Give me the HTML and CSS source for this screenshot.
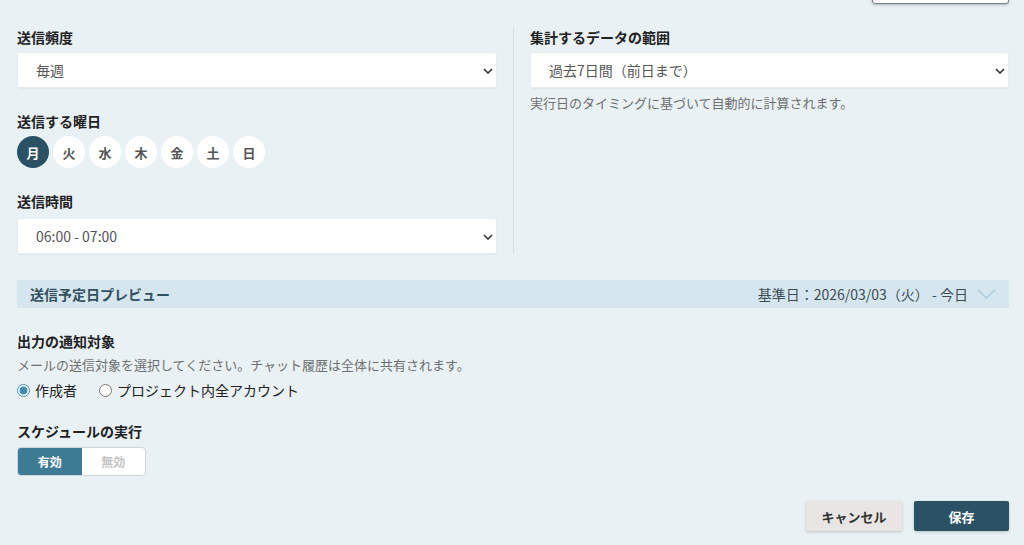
FILE: index.html
```html
<!DOCTYPE html>
<html lang="ja">
<head>
  <meta charset="UTF-8">
  <title>スケジュール設定</title>
  <link rel="stylesheet" href="styles.css">
</head>
<body>
  <div class="top-row"><div class="top-btn"></div></div>

  <div class="grid">
    <div class="col">
      <div class="label">送信頻度</div>
      <div class="select-wrap">
        <select class="select"><option>毎週</option></select>
        <svg class="chev" width="10" height="6" viewBox="0 0 10 6"><path d="M1 1l4 4 4-4" fill="none" stroke="#333" stroke-width="1.6"/></svg>
      </div>

      <div class="label mt">送信する曜日</div>
      <div class="days">
        <span class="day active">月</span>
        <span class="day">火</span>
        <span class="day">水</span>
        <span class="day">木</span>
        <span class="day">金</span>
        <span class="day">土</span>
        <span class="day">日</span>
      </div>

      <div class="label mt">送信時間</div>
      <div class="select-wrap sel-time">
        <select class="select"><option>06:00 - 07:00</option></select>
        <svg class="chev" width="10" height="6" viewBox="0 0 10 6"><path d="M1 1l4 4 4-4" fill="none" stroke="#333" stroke-width="1.6"/></svg>
      </div>
    </div>

    <div class="col col-right">
      <div class="label">集計するデータの範囲</div>
      <div class="select-wrap">
        <select class="select"><option>過去7日間（前日まで）</option></select>
        <svg class="chev" width="10" height="6" viewBox="0 0 10 6"><path d="M1 1l4 4 4-4" fill="none" stroke="#333" stroke-width="1.6"/></svg>
      </div>
      <div class="help">実行日のタイミングに基づいて自動的に計算されます。</div>
    </div>
  </div>

  <div class="preview">
    <span class="preview-title">送信予定日プレビュー</span>
    <span class="preview-right">
      基準日：2026/03/03（火） - 今日
      <svg width="19" height="10" viewBox="0 0 19 10"><path d="M1 1l8.5 8 8.5-8" fill="none" stroke="#a9cbdb" stroke-width="1.3"/></svg>
    </span>
  </div>

  <div class="label target">出力の通知対象</div>
  <div class="help help-tight">メールの送信対象を選択してください。チャット履歴は全体に共有されます。</div>
  <div class="radios">
    <label class="radio"><input type="radio" name="target" checked> 作成者</label>
    <label class="radio"><input type="radio" name="target"> プロジェクト内全アカウント</label>
  </div>

  <div class="label run">スケジュールの実行</div>
  <div class="toggle">
    <span class="seg on">有効</span>
    <span class="seg">無効</span>
  </div>

  <div class="actions">
    <button class="btn btn-cancel">キャンセル</button>
    <button class="btn btn-save">保存</button>
  </div>
</body>
</html>
```

FILE: styles.css
```css
body { margin: 0; padding: 0 15px 0 17px; background: #e9f1f5; font-family: "Noto Sans CJK JP", "Noto Sans", sans-serif; color: #222; font-size: 14px; overflow: hidden; height: 545px; }
.top-row { height: 3px; display: flex; justify-content: flex-end; }
.top-btn { width: 135px; height: 34px; margin-top: -32px; background: #fff; border: 1px solid #71838d; border-radius: 3px; box-shadow: 0 1px 3px rgba(0,0,0,0.25); }

.grid { display: grid; grid-template-columns: 480px 1fr; column-gap: 16px; margin-top: 24px; }
.col-right { border-left: 1px solid #d5dfe4; padding-left: 16px; }

.label { font-weight: bold; font-size: 14px; line-height: 20px; color: #222; margin-bottom: 5px; }
.label.mt { margin-top: 23px; }
.help { font-size: 13px; line-height: 20px; color: #6f6f6f; margin-top: 5px; }

.select-wrap { position: relative; height: 36px; }
.sel-time { margin-top: 7px; }
.select { appearance: none; -webkit-appearance: none; box-sizing: border-box; width: 100%; height: 36px; border: 1px solid #e6ecef; border-radius: 2px; background: #fff; padding: 0 18px; font-family: inherit; font-size: 14px; color: #555; box-shadow: 0 1px 1px rgba(0,0,0,0.04); }
.chev { position: absolute; right: 4px; top: 16px; pointer-events: none; }

.days { display: flex; gap: 4px; margin-top: 1px; }
.day { width: 32px; height: 32px; border-radius: 50%; background: #fff; display: flex; align-items: center; justify-content: center; font-size: 13px; font-weight: bold; color: #555; }
.day.active { background: #2b5264; color: #fff; }

.preview { display: flex; justify-content: space-between; align-items: center; height: 28px; margin-top: 26px; background: #d5e6ee; padding: 0 13px; }
.preview-title { font-weight: bold; font-size: 14px; color: #34505e; }
.preview-right { display: flex; align-items: center; gap: 9px; font-size: 14px; color: #3c4c55; }

.target { margin-top: 23px; margin-bottom: 4px; }
.help-tight { margin-top: 0; }
.radios { display: flex; gap: 22px; margin-top: 5px; font-size: 14px; color: #222; line-height: 20px; }
.radio { display: flex; align-items: center; gap: 5px; }
.radio input { margin: 0; width: 13px; height: 13px; accent-color: #3f8db2; }

.run { margin-top: 21px; margin-bottom: 6px; }
.toggle { display: flex; width: 129px; height: 29px; border: 1px solid #cfd6da; border-radius: 4px; overflow: hidden; background: #fff; box-sizing: border-box; }
.seg { flex: 1; display: flex; align-items: center; justify-content: center; font-size: 12px; font-weight: bold; color: #c4c4c4; }
.seg.on { background: #3e7b94; color: #fff; }

.actions { display: flex; justify-content: flex-end; gap: 12px; margin-top: 25px; }
.btn { height: 30px; border: none; border-radius: 2px; font-family: inherit; font-size: 13px; font-weight: bold; box-shadow: 0 1px 3px rgba(0,0,0,0.2); }
.btn-cancel { width: 96px; background: #e8e6e4; color: #333; }
.btn-save { width: 95px; background: #2b5264; color: #fff; }
```
